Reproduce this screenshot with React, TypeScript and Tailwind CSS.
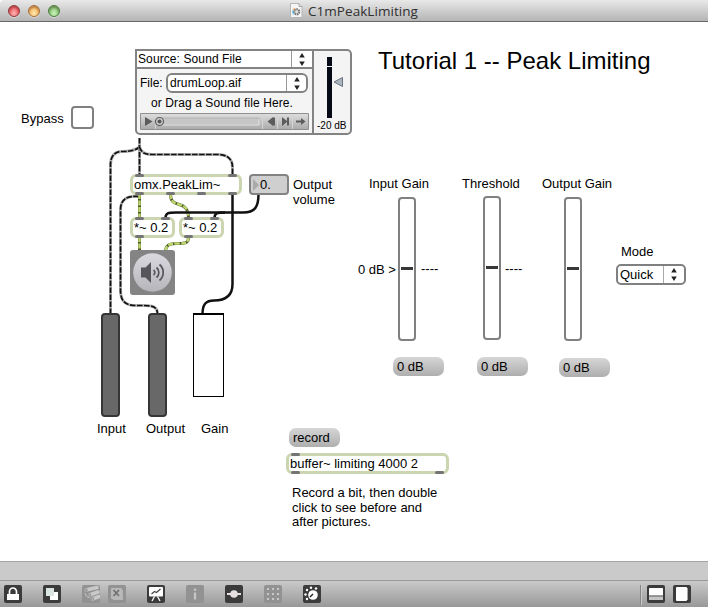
import type { ReactNode } from 'react';

const SANS = 'font-["Liberation_Sans",Arial,sans-serif]';

function TrafficLight({ tone }: { tone: string }) {
  return (
    <span className={`size-3 rounded-full border shadow-[inset_0_2px_2px_rgba(70,0,0,0.3),0_1px_0_rgba(255,255,255,0.4)] ${tone}`} />
  );
}

function TitleBar() {
  return (
    <header className="relative flex h-[22px] shrink-0 items-center rounded-tl-[4px] border-b border-[#686868] bg-linear-to-b from-[#e9e9e9] to-[#b4b4b4] pl-2">
      <div className="flex gap-2">
        <TrafficLight tone="border-[#8d3a3a] bg-radial-[at_50%_75%] from-[#ffb3b3] to-[#e5383f]" />
        <TrafficLight tone="border-[#a3703a] bg-radial-[at_50%_75%] from-[#ffe9ae] to-[#efa03f]" />
        <TrafficLight tone="border-[#4b7d40] bg-radial-[at_50%_75%] from-[#cdf3ba] to-[#62b253]" />
      </div>
      <div className="ml-[230px] flex items-center gap-[5px]">
        <svg width="13" height="15" viewBox="0 0 13 15">
          <path d="M.5.5h8.5l3 3v11H.5z" fill="#f5f5f5" stroke="#b5b5b5" />
          <path d="M9 .5v3h3" fill="#ddd" stroke="#a5a5a5" />
          <circle cx="6.7" cy="8.8" r="2.6" fill="#ddd" stroke="#777" strokeWidth="2" strokeDasharray="1.6 .7" />
          <path d="M3.5 11.4A4.2 4.2 0 0 1 3.2 7" fill="none" stroke="#59bfe8" strokeWidth="1.2" />
          <path d="M3.2 7.2a4 4 0 0 1 2-2" fill="none" stroke="#f0a45c" strokeWidth="1.2" />
        </svg>
        <h1 className='text-[13.5px] leading-5 font-normal tracking-[0.05px] whitespace-nowrap text-[#303030] font-["Open_Sans","Noto_Sans",sans-serif]'>C1mPeakLimiting</h1>
      </div>
    </header>
  );
}

function Steppers() {
  return (
    <svg width="6" height="13" viewBox="0 0 6 13" className="shrink-0">
      <path d="M3 0 5.8 4.4H.2zM3 13 .2 8.6h5.6z" fill="#222" />
    </svg>
  );
}

function Label({ at, children }: { at: string; children: ReactNode }) {
  return <div className={`absolute text-[13px] leading-[15px] whitespace-nowrap ${at}`}>{children}</div>;
}

function SourcePanel() {
  return (
    <section className="absolute top-[49px] left-[135px] flex h-[86px] w-[217px] overflow-hidden rounded-tr-[5px] rounded-b-[5px] border-2 border-[#838383] bg-[#f4f4f4]">
      <div className="flex w-[177px] flex-col border-r-2 border-[#838383]">
        <div className="flex h-[18px] shrink-0 border-b-2 border-[#838383] bg-white">
          <div className="w-[155px] border-r border-[#999] pl-px text-[12px] leading-[16px] tracking-[0.1px] whitespace-nowrap">Source: Sound File</div>
          <div className="flex flex-1 items-center justify-center"><Steppers /></div>
        </div>
        <div className="mt-1 flex h-5 shrink-0 items-center pl-[3px] text-[12px]">
          <span className="w-[26px] leading-[19px]">File:</span>
          <div className="flex h-5 w-[142px] rounded-[6px] border-2 border-[#838383] bg-white">
            <span className="w-[119px] border-r border-[#999] pl-0.5 leading-4 tracking-[0.1px]">drumLoop.aif</span>
            <span className="flex flex-1 items-center justify-center"><Steppers /></span>
          </div>
        </div>
        <div className="mt-0.5 pl-3.5 text-[12px] leading-4 tracking-[0.1px] whitespace-nowrap">or Drag a Sound file Here.</div>
        <svg width="170" height="17" viewBox="0 0 170 17" className="mt-0.5 ml-[3px] shrink-0">
          <defs>
            <linearGradient id="bar" x2="0" y2="1"><stop stopColor="#dedede" /><stop offset="1" stopColor="#aaa" /></linearGradient>
          </defs>
          <path d="M.5.5h168v16H.5z" fill="url(#bar)" stroke="#909090" />
          <path d="M15.500 1v15M122.500 1v15M137.500 1v15M152.500 1v15" stroke="#d4d4d4" />
          <rect x="17" y="5" width="103" height="7" rx="2" fill="#c6c6c6" stroke="#b5b5b5" />
          <path d="M17 12h102V6" fill="none" stroke="#e2e2e2" />
          <path d="m5 4 7.500 4.500L5 13zM133 4v9l-5.500-4.500zM142 4l5.500 4.500-5.500 4.500z" fill="#5c5c5c" />
          <path d="M134 4.500v8M148 4.500v8M156 8.500h8" fill="none" stroke="#5c5c5c" strokeWidth="2" />
          <path d="m161 5 4.500 3.500L161 12z" fill="#5c5c5c" />
          <circle cx="19.500" cy="8.500" r="4" fill="#ccc" stroke="#5c5c5c" strokeWidth="1.200" />
          <circle cx="19.500" cy="8.500" r="2" fill="#555" />
        </svg>
      </div>
      <div className="flex flex-1 flex-col pt-1.5">
        <svg width="36" height="61" viewBox="0 0 36 61" className="shrink-0">
          <path d="M13 0h5v9h-5zM13 10h5v51h-5z" fill="#060a16" />
          <path d="M28.500 20.500v9L20 25z" fill="#adb6c0" stroke="#68727e" />
        </svg>
        <div className="mt-[3px] pl-[3px] text-[10px] leading-[10px] whitespace-nowrap">-20 dB</div>
      </div>
    </section>
  );
}

function Port({ at }: { at: string }) {
  return <span className={`absolute h-[3px] w-[9px] rounded-sm bg-[#747474] ${at}`} />;
}

function ObjectBox({ at, text, children }: { at: string; text: string; children?: ReactNode }) {
  return (
    <div className={`absolute rounded-[6px] border-3 border-[#cbd5b0] bg-white pl-px text-[13px] leading-[15px] whitespace-nowrap ${at}`}>
      {text}
      {children}
    </div>
  );
}

function Message({ at, text }: { at: string; text: string }) {
  return (
    <div className={`absolute h-[19px] w-[51px] rounded-[7px] bg-linear-to-b from-[#d6d6d6] to-[#aeaeae] pl-1 text-[13px] leading-[19px] ${at}`}>{text}</div>
  );
}

function Slider({ at }: { at: string }) {
  return (
    <div className={`absolute flex h-36 w-[18px] justify-center rounded-[4px] border-2 border-[#808080] bg-white ${at}`}>
      <span className="mt-[68px] h-[3px] w-3 bg-[#383838]" />
    </div>
  );
}

function Wires() {
  const signals = [
    'M139.500 138v38',
    'M139.500 147C136 150 132 151.500 121 151.500C114 152 110.500 157 110.500 165V314',
    'M139.500 147C141 152 144 154.500 152 154.500H218C228 154.500 232.500 160 232.500 167V175',
    'M139 196.500C126 195.500 120.500 200 120.500 210V290C120.500 302 126 305.500 136 305.500H144C153 305.500 157.500 307 157.500 314',
  ];
  const audio = [
    'M139.500 194v24',
    'M170.500 194C170.500 201 173 203 179 204.500C186 206 188.500 210 188.500 218',
    'M139.500 237v14',
    'M188.500 237C188.500 243 186 243.500 178 243.500C169 243.500 166 245 165.500 251',
  ];
  return (
    <svg width="300" height="340" viewBox="0 0 300 340" className="absolute top-0 left-0" fill="none">
      {signals.map((d) => (
        <g key={d}>
          <path d={d} stroke="#b4b4b4" strokeWidth="3" />
          <path d={d} stroke="#111" strokeWidth="1.700" strokeDasharray="5.500 1.500" />
        </g>
      ))}
      {audio.map((d) => (
        <g key={d}>
          <path d={d} stroke="#4f5930" strokeWidth="3" />
          <path d={d} stroke="#bed96c" strokeWidth="2.400" strokeDasharray="5 1.500" />
        </g>
      ))}
      <g stroke="#111" strokeWidth="2.500">
        <path d="M258.500 194C258.500 207 255 212.500 243 212.500H176C168 212.500 165.500 213 165.500 218" />
        <path d="M225 212.500C217 212.500 214.500 213 214.500 218" />
        <path d="M232.500 194V284C232.500 295 226 300.500 214 300.500C206 300.500 202.500 304 202.500 314" />
      </g>
    </svg>
  );
}

function Patcher() {
  return (
    <>
      <Wires />
      <SourcePanel />
      <h2 className="absolute top-[46px] left-[378px] text-[24px] leading-[30px] font-normal whitespace-nowrap">Tutorial 1 -- Peak Limiting</h2>

      <Label at="left-[21px] top-[111px]">Bypass</Label>
      <div className="absolute top-[106px] left-[71px] size-[23px] rounded-[4px] border-2 border-[#808080] bg-white" />

      <ObjectBox at="left-[130px] top-[174px] h-[21px] w-[112px]" text="omx.PeakLim~">
        <Port at="left-[2px] -top-[3px]" />
        <Port at="left-[95px] -top-[3px]" />
        <Port at="left-[2px] -bottom-[3px]" />
        <Port at="left-[33px] -bottom-[3px]" />
        <Port at="left-[64px] -bottom-[3px]" />
        <Port at="left-[95px] -bottom-[3px]" />
      </ObjectBox>
      <div className="absolute top-[174px] left-[249px] flex h-[21px] w-10 items-center gap-px rounded-[4px] border-2 border-[#838383] bg-[#cfcfcf] text-[13px] leading-4">
        <svg width="6" height="12" viewBox="0 0 6 12" className="ml-0.5"><path d="m0 0 6 6-6 6z" fill="#aaa" /></svg>
        0.
      </div>
      <Label at="left-[293px] top-[177px]">Output<br />volume</Label>

      <ObjectBox at="left-[130px] top-[217px] h-[21px] w-[45px]" text="*~ 0.2">
        <Port at="left-[2px] -top-[3px]" />
        <Port at="left-[28px] -top-[3px]" />
        <Port at="left-[2px] -bottom-[3px]" />
      </ObjectBox>
      <ObjectBox at="left-[179px] top-[217px] h-[21px] w-[45px]" text="*~ 0.2">
        <Port at="left-[2px] -top-[3px]" />
        <Port at="left-[28px] -top-[3px]" />
        <Port at="left-[2px] -bottom-[3px]" />
      </ObjectBox>

      <svg width="45" height="45" viewBox="0 0 45 45" className="absolute top-[250px] left-[130px]">
        <defs>
          <linearGradient id="dac" x2="0" y2="1"><stop stopColor="#d9d9df" /><stop offset="1" stopColor="#b5b5ba" /></linearGradient>
        </defs>
        <rect width="45" height="45" rx="3" fill="#848484" />
        <circle cx="22.500" cy="22.500" r="19.300" fill="url(#dac)" />
        <path d="M11 17.500h4.500l5.500-5.500v21l-5.500-5.500H11z" fill="#55555a" />
        <g fill="none" stroke="#55555a" strokeWidth="1.700">
          <path d="M23.500 20a3 3 0 0 1 0 5M26.500 17.500a6.500 6.500 0 0 1 0 10M29.500 14.500a10.500 10.500 0 0 1 0 16" />
        </g>
      </svg>

      <div className="absolute top-[313px] left-[101px] h-[104px] w-[19px] rounded-[4px] border-2 border-[#363636] bg-[#686868]" />
      <div className="absolute top-[313px] left-[148px] h-[104px] w-[19px] rounded-[4px] border-2 border-[#363636] bg-[#686868]" />
      <div className="absolute top-[313px] left-[193px] h-[84px] w-[31px] border border-t-2 border-black bg-white" />
      <Label at="left-[97px] top-[421px]">Input</Label>
      <Label at="left-[146px] top-[421px]">Output</Label>
      <Label at="left-[201px] top-[421px]">Gain</Label>

      <Label at="left-[369px] top-[176px]">Input Gain</Label>
      <Label at="left-[462px] top-[176px]">Threshold</Label>
      <Label at="left-[542px] top-[176px]">Output Gain</Label>
      <Slider at="left-[398px] top-[197px]" />
      <Slider at="left-[483px] top-[196px]" />
      <Slider at="left-[564px] top-[197px]" />
      <Label at="left-[358px] top-[262px]">0 dB &gt;</Label>
      <Label at="left-[421px] top-[261px]">----</Label>
      <Label at="left-[505px] top-[261px]">----</Label>
      <Message at="left-[393px] top-[357px]" text="0 dB" />
      <Message at="left-[477px] top-[357px]" text="0 dB" />
      <Message at="left-[559px] top-[358px]" text="0 dB" />

      <Label at="left-[621px] top-[244px]">Mode</Label>
      <div className="absolute top-[264px] left-[616px] flex h-[21px] w-[70px] rounded-[5px] border-2 border-[#808080] bg-white text-[13px] leading-[17px]">
        <span className="w-[46px] border-r border-[#aaa] pl-0.5">Quick</span>
        <span className="flex flex-1 items-center justify-center"><Steppers /></span>
      </div>

      <Message at="left-[289px] top-[428px]" text="record" />
      <ObjectBox at="left-[286px] top-[453px] h-[21px] w-[163px]" text="buffer~ limiting 4000 2">
        <Port at="left-[2px] -top-[3px]" />
        <Port at="left-[2px] -bottom-[3px]" />
        <Port at="left-[146px] -bottom-[3px]" />
      </ObjectBox>
      <div className="absolute top-[486px] left-[292px] text-[13px] leading-[14.5px] whitespace-nowrap">
        Record a bit, then double<br />click to see before and<br />after pictures.
      </div>
    </>
  );
}

function Tool({ dim = false, children }: { dim?: boolean; children: ReactNode }) {
  return (
    <svg width="18" height="18" viewBox="0 0 18 18" fill="none" className="shrink-0">
      <rect width="18" height="18" rx="2" fill={dim ? '#929292' : '#3b3b3b'} />
      {children}
    </svg>
  );
}

function Toolbar() {
  return (
    <footer className="flex h-[27px] shrink-0 items-start border-t border-[#999] bg-linear-to-b from-[#cacaca] to-[#989898] pt-1 pr-[17px] pl-1">
      <div className="flex gap-[21px]">
        <Tool>
          <path d="M5.500 9V6.500a3.500 3.500 0 0 1 7 0V9" stroke="#fff" strokeWidth="1.700" />
          <path d="M3 9h12v6H3z" fill="#fff" />
        </Tool>
        <Tool>
          <path d="M7 7h8v8H7z" fill="#fff" />
          <path d="M3 3h8v8H3z" fill="#dbe3e3" />
        </Tool>
        <div className="flex gap-2">
          <Tool dim>
            <path d="m4 5 11-2.500M7.500 10 16 7M10.500 14l6.500-2.500" stroke="#c9c9c9" strokeWidth="3.600" strokeLinecap="round" />
            <path d="M3 8c.5 3 2 4.500 4.500 4.500" stroke="#c4c4c4" />
            <g stroke="#929292" fill="#bbb">
              <circle cx="4" cy="5" r="1.300" /><circle cx="7.500" cy="10" r="1.300" /><circle cx="10.500" cy="14" r="1.300" />
            </g>
          </Tool>
          <Tool dim>
            <path d="M13 5h2v10H5v-2" fill="#b5b5b5" />
            <rect x="3" y="3" width="11" height="11" rx="1" fill="#b9b9b9" />
            <path d="m5.500 5 5.500 6M11 5l-5.500 6" stroke="#707070" strokeWidth="1.700" />
          </Tool>
        </div>
        <Tool>
          <rect x="2" y="2" width="14" height="9.500" rx="1" fill="#fff" />
          <path d="m4.500 9 3-2.500 2 1L13.500 4" stroke="#444" strokeWidth="1.200" />
          <path d="M7.500 11.500 5 16M10.500 11.500l2.500 4.500" stroke="#fff" strokeWidth="1.300" />
        </Tool>
        <Tool dim>
          <circle cx="9" cy="4.800" r="1.300" fill="#c6c6c6" />
          <path d="M9 7.500V14.500" stroke="#c6c6c6" strokeWidth="2.200" />
        </Tool>
        <Tool>
          <path d="M2 9h14" stroke="#e5dfe0" strokeWidth="2" />
          <circle cx="9" cy="9" r="3.800" fill="#e5dfe0" />
        </Tool>
        <Tool dim>
          {[4, 9, 14].map((y) => [4, 9, 14].map((x) => <rect key={`${x}-${y}`} x={x - 1} y={y - 1} width="2" height="2" fill="#c8c8c8" />))}
        </Tool>
        <Tool>
          <circle cx="10" cy="10" r="4.800" fill="#fff" />
          <path d="m7 12 3-3" stroke="#222" strokeWidth="1.500" />
          <g fill="#fff">
            <circle cx="2.500" cy="9.500" r="1.200" /><circle cx="4" cy="5" r="1.200" /><circle cx="8" cy="2.800" r="1.200" />
            <circle cx="13" cy="3.500" r="1.200" /><circle cx="4" cy="14" r="1.200" />
          </g>
        </Tool>
      </div>
      <div className="ml-auto flex gap-2">
        <span className="-mr-[3px] h-5 w-0.5 border-l border-[#858585] bg-[#ccc]" />
        <Tool>
          <rect x="2" y="3" width="14" height="12" rx=".5" fill="#fff" />
          <path d="M2 11.500h14V15H2z" fill="#c5c5c5" />
          <path d="M2 11h14" stroke="#3b3b3b" />
        </Tool>
        <Tool>
          <rect x="3" y="2" width="11" height="14" rx="1" fill="#fff" />
          <path d="M14.500 3v12" stroke="#aaa" />
        </Tool>
      </div>
    </footer>
  );
}

export default function App() {
  return (
    <div className={`relative flex h-[607px] w-[708px] flex-col overflow-hidden bg-white text-black ${SANS}`}>
      <TitleBar />
      <main className="flex-1"><Patcher /></main>
      <div className="h-[19px] shrink-0 border-t border-[#a5a5a5] bg-[#cacaca]" />
      <Toolbar />
    </div>
  );
}
